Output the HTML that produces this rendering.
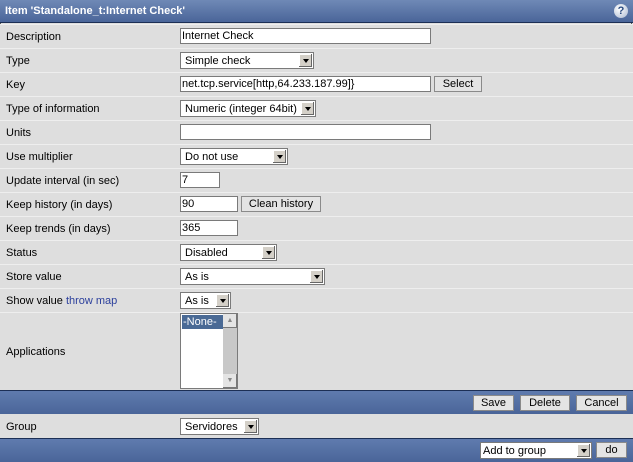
<!DOCTYPE html>
<html><head><style>
body{margin:0;width:633px;height:462px;overflow:hidden;background:#dedede;font-family:"Liberation Sans",sans-serif;font-size:11px;color:#000;position:relative}
.a{position:absolute}
.hdr{left:0;top:0;width:633px;height:22px;background:linear-gradient(#6f89b6,#4a6599);border-bottom:1px solid #1c2f55;color:#fff;font-weight:bold;font-size:11px}
.bar{left:0;width:633px;height:23px;background:linear-gradient(#5f7bae,#4a6599);border-top:1px solid #1c2f55}
.row{left:0;width:633px;background:#dedede;border-top:1px solid #eeeeee;box-sizing:border-box}
.lb{left:6px}
.in{background:#fff;border:1px solid #7a7a7a;height:14px;box-sizing:content-box;line-height:15px;padding-left:1px;white-space:nowrap;overflow:hidden}
.sel{background:#fff;border:1px solid #7a7a7a;line-height:16px;padding-left:4px;box-sizing:border-box;height:17px}
.sel:after{content:"";position:absolute;right:1px;top:1px;width:13px;height:13px;background:#d4d0c8;box-shadow:inset -1px -1px #666,inset 1px 1px #fff}
.sel i{position:absolute;right:4px;top:6px;width:0;height:0;border-left:3.5px solid transparent;border-right:3.5px solid transparent;border-top:4px solid #000;z-index:2}
.btn{background:#e4e4e4;border:1px solid #8a8a8a;line-height:15px;text-align:center;box-sizing:border-box;height:16px}
</style></head><body>
<div style="position:absolute;left:0;top:0;bottom:0;width:1px;border-left:1px dotted #555"></div>
<div style="position:absolute;right:0;top:0;bottom:0;width:1px;border-left:1px dotted #555"></div>
<div class="a hdr"><span class="a" style="left:5px;top:5px">Item 'Standalone_t:Internet Check'</span>
<div class="a" style="right:5px;top:4px;width:14px;height:14px;border-radius:7px;background:radial-gradient(circle at 40% 35%,#fff,#aab8d0);color:#2a4a80;font-size:11px;line-height:14px;text-align:center">?</div></div>

<div class="a row" style="top:24px;height:24px"></div>
<div class="a row" style="top:48px;height:24px"></div>
<div class="a row" style="top:72px;height:24px"></div>
<div class="a row" style="top:96px;height:24px"></div>
<div class="a row" style="top:120px;height:24px"></div>
<div class="a row" style="top:144px;height:24px"></div>
<div class="a row" style="top:168px;height:24px"></div>
<div class="a row" style="top:192px;height:24px"></div>
<div class="a row" style="top:216px;height:24px"></div>
<div class="a row" style="top:240px;height:24px"></div>
<div class="a row" style="top:264px;height:24px"></div>
<div class="a row" style="top:288px;height:24px"></div>
<div class="a row" style="top:312px;height:78px"></div>
<div class="a bar" style="top:390px"></div>
<div class="a row" style="top:414px;height:24px;border-top:none"></div>
<div class="a bar" style="top:438px"></div>

<div class="a lb" style="top:31px">Description</div>
<div class="a lb" style="top:55px">Type</div>
<div class="a lb" style="top:79px">Key</div>
<div class="a lb" style="top:103px">Type of information</div>
<div class="a lb" style="top:127px">Units</div>
<div class="a lb" style="top:151px">Use multiplier</div>
<div class="a lb" style="top:175px">Update interval (in sec)</div>
<div class="a lb" style="top:199px">Keep history (in days)</div>
<div class="a lb" style="top:223px">Keep trends (in days)</div>
<div class="a lb" style="top:247px">Status</div>
<div class="a lb" style="top:271px">Store value</div>
<div class="a lb" style="top:295px">Show value <span style="color:#2b3f9c">throw map</span></div>
<div class="a lb" style="top:346px">Applications</div>
<div class="a lb" style="top:421px">Group</div>

<div class="a in" style="left:180px;top:28px;width:248px">Internet Check</div>
<div class="a sel" style="left:180px;top:52px;width:134px">Simple check<i></i></div>
<div class="a in" style="left:180px;top:76px;width:248px">net.tcp.service[http,64.233.187.99]}</div>
<div class="a btn" style="left:434px;top:76px;width:48px">Select</div>
<div class="a sel" style="left:180px;top:100px;width:136px">Numeric (integer 64bit)<i></i></div>
<div class="a in" style="left:180px;top:124px;width:248px"></div>
<div class="a sel" style="left:180px;top:148px;width:108px">Do not use<i></i></div>
<div class="a in" style="left:180px;top:172px;width:37px">7</div>
<div class="a in" style="left:180px;top:196px;width:55px">90</div>
<div class="a btn" style="left:241px;top:196px;width:80px">Clean history</div>
<div class="a in" style="left:180px;top:220px;width:55px">365</div>
<div class="a sel" style="left:180px;top:244px;width:97px">Disabled<i></i></div>
<div class="a sel" style="left:180px;top:268px;width:145px">As is<i></i></div>
<div class="a sel" style="left:180px;top:292px;width:51px">As is<i></i></div>
<div class="a" style="left:180px;top:313px;width:56px;height:74px;background:#fff;border:1px solid #7a7a7a">
 <div class="a" style="left:1px;top:1px;width:40px;height:14px;background:#4a6a95;color:#fff;line-height:14px;padding-left:1px">-None-</div>
 <div class="a" style="right:0;top:0;width:14px;height:74px;background:#c8c8c8"></div>
 <div class="a" style="right:0;top:0;width:14px;height:14px;background:#e4e4e4;box-shadow:inset -1px -1px #777;font-size:7px;text-align:center;line-height:14px;color:#888">▲</div>
 <div class="a" style="right:0;bottom:0;width:14px;height:14px;background:#e4e4e4;box-shadow:inset -1px -1px #777;font-size:7px;text-align:center;line-height:14px;color:#888">▼</div>
</div>
<div class="a btn" style="left:473px;top:395px;width:41px">Save</div>
<div class="a btn" style="left:520px;top:395px;width:50px">Delete</div>
<div class="a btn" style="left:576px;top:395px;width:51px">Cancel</div>
<div class="a sel" style="left:180px;top:418px;width:79px">Servidores<i></i></div>
<div class="a sel" style="left:480px;top:442px;width:112px;padding-left:2px">Add to group<i></i></div>
<div class="a btn" style="left:596px;top:442px;width:31px">do</div>
</body></html>
